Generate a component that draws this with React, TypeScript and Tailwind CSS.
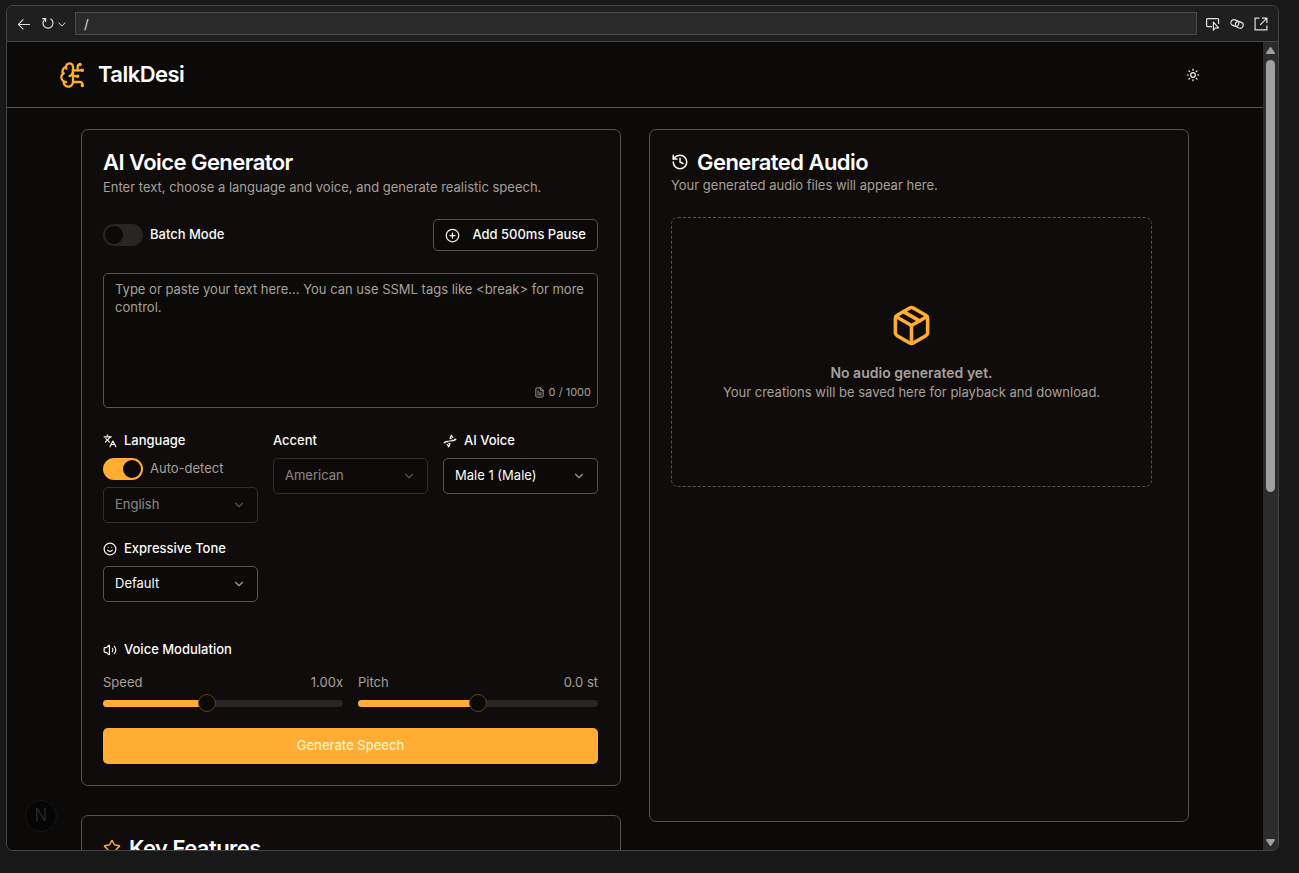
import { useState, type ReactNode } from "react";
import {
  BrainCircuit,
  ChevronDown,
  CirclePlus,
  Dna,
  FileText,
  History,
  Languages,
  Package,
  Smile,
  Star,
  Sun,
  Volume2,
} from "lucide-react";
import { VscArrowLeft, VscChevronDown } from "react-icons/vsc";

const MAX_CHARS = 1000;

function ReloadIcon() {
  return (
    <svg width="16" height="16" viewBox="0 0 16 16" fill="none" stroke="currentColor" strokeWidth="1.2">
      <path d="M2.2 2.6h3.4V6M5.4 2.9A5 5 0 1 0 10.4 2.8" />
    </svg>
  );
}

function InspectIcon() {
  return (
    <svg width="16" height="16" viewBox="0 0 16 16" fill="none" stroke="currentColor" strokeWidth="1.2">
      <path d="M7 10.6H2.6a1 1 0 0 1-1-1v-6a1 1 0 0 1 1-1h10a1 1 0 0 1 1 1V8" />
      <path d="M8.4 6.2v8l2-2.3h3.2z" strokeLinejoin="round" />
    </svg>
  );
}

function LinkIcon() {
  return (
    <svg width="16" height="16" viewBox="0 0 16 16" fill="none" stroke="currentColor" strokeWidth="1.2">
      <g transform="rotate(22 8 8)">
        <rect x="1.6" y="4.9" width="8" height="6" rx="3" />
        <rect x="6.4" y="4.9" width="8" height="6" rx="3" />
      </g>
    </svg>
  );
}

function ExternalIcon() {
  return (
    <svg width="16" height="16" viewBox="0 0 16 16" fill="none" stroke="currentColor" strokeWidth="1.2">
      <path d="M6.5 2.1H2.1v11.8h11.8V9.5M9 2.1h4.9V7M13.7 2.3 7.2 8.8" />
    </svg>
  );
}

function BrowserBar() {
  return (
    <div className="flex h-9 shrink-0 items-center border-b border-[#454545] bg-[#1f1f1f] px-[9px] text-[#e0e0e0]">
      <button aria-label="Back" className="flex w-6 items-center">
        <VscArrowLeft size={16} />
      </button>
      <button aria-label="Reload" className="flex items-center">
        <ReloadIcon />
      </button>
      <button aria-label="Reload options" className="flex w-[19px] items-center">
        <VscChevronDown size={12} />
      </button>
      <input
        aria-label="Address"
        defaultValue="/"
        className="h-[23px] min-w-0 flex-1 border border-[#4a4a4a] bg-[#2a2a2a] px-2 text-[13px] text-[#e0e0e0] outline-none"
      />
      <div className="ml-2 flex items-center gap-2">
        <button aria-label="Inspect element">
          <InspectIcon />
        </button>
        <button aria-label="Copy link">
          <LinkIcon />
        </button>
        <button aria-label="Open in browser">
          <ExternalIcon />
        </button>
      </div>
    </div>
  );
}

function ScrollTrack() {
  return (
    <div className="flex w-[15px] shrink-0 flex-col items-center bg-[#2c2c2c] py-1">
      <svg width="9" height="7" viewBox="0 0 9 7" className="my-px shrink-0 fill-[#9f9f9f]">
        <path d="M3.7.6a1 1 0 0 1 1.6 0L8.7 5.4A1 1 0 0 1 7.9 7H1.1A1 1 0 0 1 .3 5.4z" />
      </svg>
      <div className="mt-[5px] h-[54%] w-[9px] rounded-full bg-[#9f9f9f]" />
      <svg width="9" height="7" viewBox="0 0 9 7" className="mt-auto shrink-0 fill-[#9f9f9f]">
        <path d="M3.7 6.4a1 1 0 0 0 1.6 0L8.7 1.6A1 1 0 0 0 7.9 0H1.1A1 1 0 0 0 .3 1.6z" />
      </svg>
    </div>
  );
}

function Toggle({ id, checked, onChange }: { id: string; checked: boolean; onChange: (v: boolean) => void }) {
  return (
    <input
      id={id}
      type="checkbox"
      role="switch"
      checked={checked}
      onChange={(e) => onChange(e.target.checked)}
      className="h-[22px] w-10 shrink-0 cursor-pointer appearance-none rounded-full bg-[#292524] p-[2px] before:block before:size-[18px] before:rounded-full before:bg-[#0c0a09] checked:bg-[#ffad33] checked:before:ml-[18px]"
    />
  );
}

type PickerProps = { id: string; options: string[]; disabled?: boolean };

function Picker({ id, options, disabled }: PickerProps) {
  return (
    <div className={`relative ${disabled ? "opacity-50" : ""}`}>
      <select
        id={id}
        disabled={disabled}
        className="h-9 w-full appearance-none rounded-[5px] border border-[#57534e] bg-[#0c0a09] px-[11px] text-[13px] text-stone-50 opacity-100 outline-none"
      >
        {options.map((o) => (
          <option key={o}>{o}</option>
        ))}
      </select>
      <ChevronDown
        size={14}
        className="pointer-events-none absolute top-[11px] right-3 text-stone-50 opacity-60"
      />
    </div>
  );
}

function FieldLabel({ htmlFor, icon, children }: { htmlFor: string; icon?: ReactNode; children: ReactNode }) {
  return (
    <label htmlFor={htmlFor} className="mb-[6px] flex h-[22px] items-center gap-[7px] font-medium">
      {icon}
      {children}
    </label>
  );
}

type SliderProps = {
  id: string;
  label: string;
  min: number;
  max: number;
  step: number;
  initial: number;
  format: (v: number) => string;
};

function Slider({ id, label, min, max, step, initial, format }: SliderProps) {
  const [value, setValue] = useState(initial);
  const filled = ((value - min) / (max - min)) * 100;

  return (
    <div>
      <div className="flex h-[22px] items-center justify-between text-stone-400">
        <label htmlFor={id}>{label}</label>
        <output htmlFor={id}>{format(value)}</output>
      </div>
      <div className="relative flex h-[18px] items-center">
        <div className="absolute inset-x-0 h-[7px] overflow-hidden rounded-full bg-[#292524]">
          <div className="h-full bg-[#ffad33]" style={{ width: `${filled}%` }} />
        </div>
        <input
          id={id}
          type="range"
          min={min}
          max={max}
          step={step}
          value={value}
          onChange={(e) => setValue(Number(e.target.value))}
          className="relative h-[18px] w-full cursor-pointer appearance-none bg-transparent outline-none [&::-webkit-slider-thumb]:size-[18px] [&::-webkit-slider-thumb]:appearance-none [&::-webkit-slider-thumb]:rounded-full [&::-webkit-slider-thumb]:border [&::-webkit-slider-thumb]:border-[#5f4219] [&::-webkit-slider-thumb]:bg-[#0c0a09]"
        />
      </div>
    </div>
  );
}

function Card({ className = "", children }: { className?: string; children: ReactNode }) {
  return (
    <section className={`rounded-[7px] border border-[#57534e] bg-[#100c0b] py-[21px] pr-[22px] pl-[21px] ${className}`}>
      {children}
    </section>
  );
}

function CardTitle({ icon, children }: { icon?: ReactNode; children: ReactNode }) {
  return (
    <h2 className="flex items-center gap-2 text-[22px] leading-[22px] font-semibold tracking-tight text-white">
      {icon}
      {children}
    </h2>
  );
}

function GeneratorCard() {
  const [batch, setBatch] = useState(false);
  const [autoDetect, setAutoDetect] = useState(true);
  const [text, setText] = useState("");

  return (
    <Card>
      <CardTitle>AI Voice Generator</CardTitle>
      <p className="mt-[5px] leading-[18px] text-stone-400">
        Enter text, choose a language and voice, and generate realistic speech.
      </p>

      <div className="mt-[23px] flex items-center justify-between">
        <div className="flex items-center gap-[7px]">
          <Toggle id="batch" checked={batch} onChange={setBatch} />
          <label htmlFor="batch" className="font-medium">
            Batch Mode
          </label>
        </div>
        <button
          onClick={() => setText((t) => `${t}<break time="500ms"/>`)}
          className="flex h-8 items-center gap-3 rounded-[5px] border border-[#57534e] bg-[#0c0a09] px-[11px] font-medium"
        >
          <CirclePlus size={15} />
          Add 500ms Pause
        </button>
      </div>

      <div className="relative mt-[22px]">
        <textarea
          aria-label="Text to speak"
          value={text}
          maxLength={MAX_CHARS}
          onChange={(e) => setText(e.target.value)}
          placeholder="Type or paste your text here... You can use SSML tags like <break> for more control."
          className="block h-[135px] w-full resize-none rounded-[5px] border border-[#57534e] bg-[#0c0a09] px-[11px] py-[6px] leading-[18px] outline-none placeholder:text-stone-400"
        />
        <div className="absolute right-[7px] bottom-2 flex items-center gap-1 text-[11px] leading-4 text-stone-400">
          <FileText size={11} />
          {text.length} / {MAX_CHARS}
        </div>
      </div>

      <div className="mt-[22px] grid grid-cols-3 gap-[15px]">
        <div>
          <FieldLabel htmlFor="language" icon={<Languages size={14} />}>
            Language
          </FieldLabel>
          <div className="mb-[7px] flex items-center gap-[7px]">
            <Toggle id="auto" checked={autoDetect} onChange={setAutoDetect} />
            <label htmlFor="auto" className="text-stone-400">
              Auto-detect
            </label>
          </div>
          <Picker id="language" options={["English", "Hindi", "Tamil"]} disabled={autoDetect} />
        </div>
        <div>
          <FieldLabel htmlFor="accent">Accent</FieldLabel>
          <Picker id="accent" options={["American", "British", "Indian"]} disabled={autoDetect} />
        </div>
        <div>
          <FieldLabel htmlFor="voice" icon={<Dna size={14} />}>
            AI Voice
          </FieldLabel>
          <Picker id="voice" options={["Male 1 (Male)", "Female 1 (Female)"]} />
        </div>
        <div>
          <FieldLabel htmlFor="tone" icon={<Smile size={14} />}>
            Expressive Tone
          </FieldLabel>
          <Picker id="tone" options={["Default", "Cheerful", "Calm"]} />
        </div>
      </div>

      <h3 className="mt-[37px] flex h-[22px] items-center gap-[7px] font-medium">
        <Volume2 size={14} />
        Voice Modulation
      </h3>
      <div className="mt-[11px] grid grid-cols-2 gap-[15px]">
        <Slider id="speed" label="Speed" min={0.25} max={2} step={0.05} initial={1} format={(v) => `${v.toFixed(2)}x`} />
        <Slider id="pitch" label="Pitch" min={-20} max={20} step={0.5} initial={0} format={(v) => `${v.toFixed(1)} st`} />
      </div>

      <button className="mt-4 h-9 w-full rounded-[5px] bg-[#ffad33] font-medium text-[#fef3c7]">
        Generate Speech
      </button>
    </Card>
  );
}

function AudioCard() {
  return (
    <Card className="lg:h-[calc(100vh-180px)]">
      <CardTitle icon={<History size={18} />}>Generated Audio</CardTitle>
      <p className="mt-[3px] leading-[18px] text-stone-400">Your generated audio files will appear here.</p>
      <div className="mt-[23px] mr-[14px] flex min-h-[270px] flex-col items-center justify-center rounded-[7px] border border-dashed border-[#57534e] text-center text-stone-400">
        <Package size={43} className="mb-4 text-[#ffad33]" />
        <p className="text-[14px] leading-5 font-semibold">No audio generated yet.</p>
        <p className="leading-[18px]">Your creations will be saved here for playback and download.</p>
      </div>
    </Card>
  );
}

export default function App() {
  return (
    <div className="h-screen bg-[#181818] pt-[5px] pr-5 pb-[22px] pl-[6px] font-[Inter,sans-serif] text-[13px] text-stone-50">
      <div className="relative flex h-full flex-col overflow-hidden rounded-[7px] border border-[#454545]">
        <BrowserBar />
        <div className="flex min-h-0 flex-1">
          <div className="min-w-0 flex-1 overflow-y-auto bg-[#0c0a09] [scrollbar-width:none]">
            <header className="border-b border-[#57534e]">
              <div className="mx-auto flex h-[65px] max-w-[1152px] items-center justify-between">
                <a href="/" className="flex items-center gap-[11px]">
                  <BrainCircuit size={28} className="text-[#ffad33]" />
                  <span className="text-[22px] font-semibold tracking-tight text-white">TalkDesi</span>
                </a>
                <button aria-label="Toggle theme" className="flex size-9 items-center justify-center">
                  <Sun size={14} />
                </button>
              </div>
            </header>
            <main className="mx-auto grid max-w-[1152px] items-start gap-7 px-[22px] py-[21px] lg:grid-cols-2">
              <div className="flex flex-col gap-[29px]">
                <GeneratorCard />
                <Card>
                  <CardTitle icon={<Star size={18} className="text-[#ffad33]" />}>Key Features</CardTitle>
                </Card>
              </div>
              <AudioCard />
            </main>
          </div>
          <ScrollTrack />
        </div>
        <button
          aria-label="Open developer tools"
          className="absolute bottom-[18px] left-[18px] flex size-8 items-center justify-center rounded-full border border-[#171615] bg-[#050505] text-[17px] text-[#262626]"
        >
          N
        </button>
      </div>
    </div>
  );
}
